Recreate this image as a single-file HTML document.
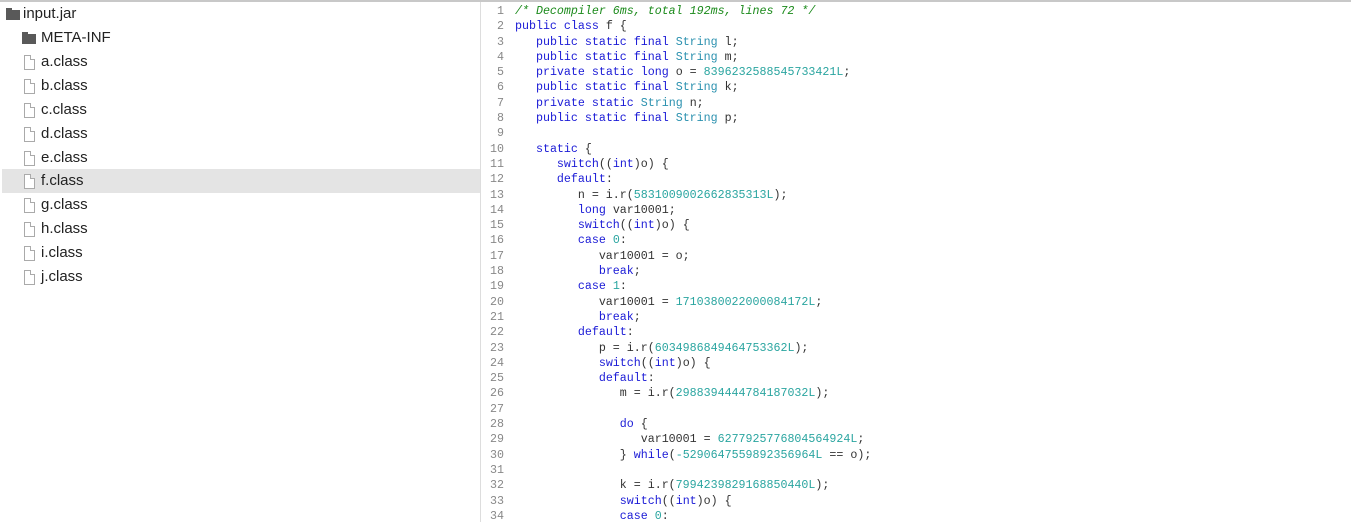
<!DOCTYPE html>
<html><head><meta charset="utf-8"><style>
html,body{margin:0;padding:0;width:1351px;height:522px;overflow:hidden;background:#fff;}
.top{position:absolute;left:0;top:0;width:1351px;height:2px;background:#c8c8c8;}
.tree{position:absolute;left:0;top:2px;width:480px;height:520px;font-family:"Liberation Sans",sans-serif;font-size:15px;color:#222;}
.row{position:absolute;left:2px;width:478px;height:24px;line-height:24px;}
.row.sel{background:#e4e4e4;}
.row span{position:absolute;top:0;}
.fold{position:absolute;width:14px;height:10px;background:#595959;top:8px;}
.fold:before{content:"";position:absolute;left:0;top:-2px;width:6px;height:2px;background:#595959;}
.file{position:absolute;width:9px;height:13px;border:1px solid #aaa;top:5px;background:#fff;}
.file:after{content:"";position:absolute;right:-1px;top:-1px;width:4px;height:4px;background:#fff;border-left:1px solid #aaa;border-bottom:1px solid #aaa;}
.sel .file:after{background:#e4e4e4;}
.div{position:absolute;left:480px;top:2px;width:1px;height:520px;background:#ddd;}
.code{position:absolute;left:482px;top:4px;font-family:"Liberation Mono",monospace;font-size:11.65px;line-height:15.3px;white-space:pre;color:#333;}
.ln{display:inline-block;width:22px;text-align:right;color:#888;margin-right:11px;}
.k{color:#1a1ad6}.t{color:#2b91af}.n{color:#2aa5a0}.c{color:#1b8a1b;font-style:italic}
</style></head><body>
<div class="top"></div>
<div class="tree">
<div class="row" style="top:0"><div class="fold" style="left:4px"></div><span style="left:21px">input.jar</span></div>
<div class="row" style="top:24px"><div class="fold" style="left:20px"></div><span style="left:39px">META-INF</span></div>
<div class="row" style="top:48px"><div class="file" style="left:22px"></div><span style="left:39px">a.class</span></div>
<div class="row" style="top:72px"><div class="file" style="left:22px"></div><span style="left:39px">b.class</span></div>
<div class="row" style="top:96px"><div class="file" style="left:22px"></div><span style="left:39px">c.class</span></div>
<div class="row" style="top:120px"><div class="file" style="left:22px"></div><span style="left:39px">d.class</span></div>
<div class="row" style="top:144px"><div class="file" style="left:22px"></div><span style="left:39px">e.class</span></div>
<div class="row sel" style="top:167px"><div class="file" style="left:22px"></div><span style="left:39px">f.class</span></div>
<div class="row" style="top:191px"><div class="file" style="left:22px"></div><span style="left:39px">g.class</span></div>
<div class="row" style="top:215px"><div class="file" style="left:22px"></div><span style="left:39px">h.class</span></div>
<div class="row" style="top:239px"><div class="file" style="left:22px"></div><span style="left:39px">i.class</span></div>
<div class="row" style="top:263px"><div class="file" style="left:22px"></div><span style="left:39px">j.class</span></div>
</div>
<div class="div"></div>
<div class="code"><span class="ln">1</span><span class="c">/* Decompiler 6ms, total 192ms, lines 72 */</span>
<span class="ln">2</span><span class="k">public class</span> f {
<span class="ln">3</span>   <span class="k">public static final</span> <span class="t">String</span> l;
<span class="ln">4</span>   <span class="k">public static final</span> <span class="t">String</span> m;
<span class="ln">5</span>   <span class="k">private static long</span> o = <span class="n">8396232588545733421L</span>;
<span class="ln">6</span>   <span class="k">public static final</span> <span class="t">String</span> k;
<span class="ln">7</span>   <span class="k">private static</span> <span class="t">String</span> n;
<span class="ln">8</span>   <span class="k">public static final</span> <span class="t">String</span> p;
<span class="ln">9</span>
<span class="ln">10</span>   <span class="k">static</span> {
<span class="ln">11</span>      <span class="k">switch</span>((<span class="k">int</span>)o) {
<span class="ln">12</span>      <span class="k">default</span>:
<span class="ln">13</span>         n = i.r(<span class="n">5831009002662835313L</span>);
<span class="ln">14</span>         <span class="k">long</span> var10001;
<span class="ln">15</span>         <span class="k">switch</span>((<span class="k">int</span>)o) {
<span class="ln">16</span>         <span class="k">case</span> <span class="n">0</span>:
<span class="ln">17</span>            var10001 = o;
<span class="ln">18</span>            <span class="k">break</span>;
<span class="ln">19</span>         <span class="k">case</span> <span class="n">1</span>:
<span class="ln">20</span>            var10001 = <span class="n">1710380022000084172L</span>;
<span class="ln">21</span>            <span class="k">break</span>;
<span class="ln">22</span>         <span class="k">default</span>:
<span class="ln">23</span>            p = i.r(<span class="n">6034986849464753362L</span>);
<span class="ln">24</span>            <span class="k">switch</span>((<span class="k">int</span>)o) {
<span class="ln">25</span>            <span class="k">default</span>:
<span class="ln">26</span>               m = i.r(<span class="n">2988394444784187032L</span>);
<span class="ln">27</span>
<span class="ln">28</span>               <span class="k">do</span> {
<span class="ln">29</span>                  var10001 = <span class="n">6277925776804564924L</span>;
<span class="ln">30</span>               } <span class="k">while</span>(<span class="n">-5290647559892356964L</span> == o);
<span class="ln">31</span>
<span class="ln">32</span>               k = i.r(<span class="n">7994239829168850440L</span>);
<span class="ln">33</span>               <span class="k">switch</span>((<span class="k">int</span>)o) {
<span class="ln">34</span>               <span class="k">case</span> <span class="n">0</span>:
</div>
</body></html>
